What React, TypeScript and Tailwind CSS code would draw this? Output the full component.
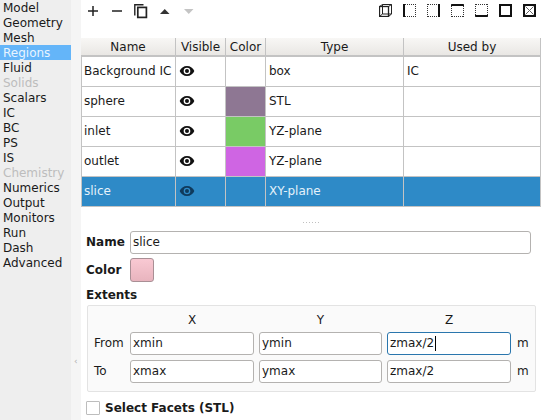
import React from "react";

const nav: [string, boolean?][] = [
  ["Model"], ["Geometry"], ["Mesh"], ["Regions"], ["Fluid"], ["Solids", true], ["Scalars"], ["IC"], ["BC"], ["PS"], ["IS"],
  ["Chemistry", true], ["Numerics"], ["Output"], ["Monitors"], ["Run"], ["Dash"], ["Advanced"],
];

const rows = [
  { name: "Background IC", color: "", type: "box", used: "IC" },
  { name: "sphere", color: "bg-[#8e7793]", type: "STL", used: "" },
  { name: "inlet", color: "bg-[#79cb65]", type: "YZ-plane", used: "" },
  { name: "outlet", color: "bg-[#cf65e3]", type: "YZ-plane", used: "" },
  { name: "slice", color: "", type: "XY-plane", used: "", selected: true },
];

function Eye({ dark }: { dark?: boolean }) {
  return (
    <svg width="16" height="16" viewBox="0 0 24 24" fill={dark ? "#0f3a5c" : "#111"} className="-mt-[1px]">
      <path d="M12 4.5C7 4.5 2.7 7.6 1 12c1.7 4.4 6 7.5 11 7.5s9.3-3.1 11-7.5c-1.7-4.4-6-7.5-11-7.5zM12 17a5 5 0 1 1 0-10 5 5 0 0 1 0 10zm0-8a3 3 0 1 0 0 6 3 3 0 0 0 0-6z" />
    </svg>
  );
}

function ViewIcon({ top, bottom, left, right, cross }: { top?: boolean; bottom?: boolean; left?: boolean; right?: boolean; cross?: boolean }) {
  const line = (on?: boolean) => (on ? { stroke: "#111", strokeWidth: 2 } : { stroke: "#333", strokeWidth: 1, strokeDasharray: "1 1" });
  return (
    <svg width="13" height="13" viewBox="0 0 13 13" fill="none">
      <line x1={left || top ? 0 : 1} y1={top ? 1 : 0.5} x2="13" y2={top ? 1 : 0.5} {...line(top)} />
      <line x1={left || bottom ? 0 : 1} y1={bottom ? 12 : 12.5} x2="13" y2={bottom ? 12 : 12.5} {...line(bottom)} />
      <line x1={left ? 1 : 0.5} y1="0" x2={left ? 1 : 0.5} y2="13" {...line(left)} />
      <line x1={right ? 12 : 12.5} y1="0" x2={right ? 12 : 12.5} y2="13" {...line(right)} />
      {cross && <path d="M2.5 2.5l8 8M10.5 2.5l-8 8" stroke="#666" strokeWidth="1" />}
    </svg>
  );
}

function Field({ value, focused, className = "" }: { value: string; focused?: boolean; className?: string }) {
  return (
    <div className={`flex h-[23px] items-center rounded-[3px] border bg-white pl-[2px] ${focused ? "border-[#2a76ad]" : "border-[#b4b2b0]"} ${className}`}>
      <span>{value}</span>
      {focused && <span className="ml-[1px] h-[15px] w-px bg-black" />}
    </div>
  );
}

function Row({ label, a, b, c, focused }: { label: string; a: string; b: string; c: string; focused?: boolean }) {
  return (
    <div className="flex items-center">
      <span className="w-[42px] pl-[6px]">{label}</span>
      <Field value={a} className="w-[124px]" />
      <Field value={b} className="ml-[5px] w-[123px]" />
      <Field value={c} focused={focused} className="ml-[5px] w-[124px]" />
      <span className="ml-[6px]">m</span>
    </div>
  );
}

const colClass = ["w-[95px]", "w-[50px]", "w-[40px]", "w-[138px]", "flex-1"];

export default function App() {
  return (
    <div className="flex h-[420px] w-[541px] overflow-hidden bg-white text-[12px] leading-[15px] text-[#1a1a1a] [font-family:'DejaVu_Sans',sans-serif]">
      <nav className="w-[71px] shrink-0 bg-[#eeeeee]">
        {nav.map(([n, off]) => (
          <div key={n} className={`h-[15px] pl-[3px] leading-[17px] ${n === "Regions" ? "bg-[#64b5f9] text-[#e8f4ff]" : off ? "text-[#bdbdbd]" : ""}`}>{n}</div>
        ))}
      </nav>
      <div className="relative w-[10px] shrink-0 bg-[#f5f5f5]">
        <span className="absolute left-[3px] top-[354px] text-[9px] text-[#b0b0b0]">‹</span>
      </div>
      <main className="flex min-w-0 flex-1 flex-col">
        <div className="flex h-[38px] items-start justify-between pr-[5px] pt-[3px]">
          <div className="flex items-center gap-[10px] pl-[5px]">
            <svg width="14" height="16" viewBox="0 0 14 16" fill="none" stroke="#222" strokeWidth="1.5"><path d="M2 8h10M7 3v10" /></svg>
            <svg width="14" height="16" viewBox="0 0 14 16" fill="none" stroke="#222" strokeWidth="1.5"><path d="M2 8h10" /></svg>
            <svg width="14" height="16" viewBox="0 0 14 16" fill="none" stroke="#222" strokeWidth="1.4"><path d="M9.5 1.7H0.8v10.8" /><rect x="3.8" y="4.4" width="8.6" height="10" strokeWidth="1.7" /></svg>
            <svg width="14" height="16" viewBox="0 0 14 16" fill="#333"><path d="M2 11L6.75 6l4.75 5z" /></svg>
            <svg width="14" height="16" viewBox="0 0 14 16" fill="#c4c4c4"><path d="M2 6h9.5l-4.75 5z" /></svg>
          </div>
          <div className="flex items-center gap-[11px] pt-[1px]">
            <svg width="13" height="13" viewBox="0 0 13 13" fill="none" stroke="#222" strokeWidth="1"><rect x="0.5" y="2.5" width="9" height="10" strokeWidth="1.3" /><path d="M0.5 2.5l3-2h9v9.5l-3 2.5M9.5 2.5l3-2M3.5 0.5v9.5h9M0.5 12.5l3-2.5" /></svg>
            <ViewIcon left />
            <ViewIcon right />
            <ViewIcon top />
            <ViewIcon bottom />
            <ViewIcon top bottom left right />
            <ViewIcon top bottom left right cross />
          </div>
        </div>

        <div className="border-b border-r border-[#c3c3c3]">
          <div className="flex h-[19px] border-b-2 border-[#c3c3c3] bg-gradient-to-b from-[#f8f7f5] to-[#e9e7e4]">
            {["Name", "Visible", "Color", "Type", "Used by"].map((h, i) => (
              <div key={h} className={`${colClass[i]} flex items-center justify-center pt-[1px] ${i < 4 ? "border-r border-[#c3c3c3]" : ""}`}>{h}</div>
            ))}
          </div>
          {rows.map((r) => (
            <div key={r.name} className={`flex h-[30px] border-b border-l border-[#c3c3c3] last:h-[29px] last:border-b-0 ${r.selected ? "bg-[#2e8ac7] text-[#e4f1fa]" : ""}`}>
              <div className="flex w-[94px] items-center border-r border-[#c3c3c3] pl-[2px]">{r.name}</div>
              <div className="flex w-[50px] items-center border-r border-[#c3c3c3] pl-[3px]"><Eye dark={r.selected} /></div>
              <div className={`w-[40px] border-r border-[#c3c3c3] ${r.color}`} />
              <div className="flex w-[138px] items-center border-r border-[#c3c3c3] pl-[3px]">{r.type}</div>
              <div className="flex flex-1 items-center pl-[3px]">{r.used}</div>
            </div>
          ))}
        </div>

        <div className="flex h-[24px] items-start justify-center pt-[14px]">
          <span className="mt-[1px] h-px w-[17px] bg-[repeating-linear-gradient(90deg,#c0c0c0_0_1px,transparent_1px_3px)]" />
        </div>

        <div className="flex items-center pl-[5px] pr-[10px]">
          <span className="w-[44px] font-bold">Name</span>
          <Field value="slice" className="flex-1" />
        </div>
        <div className="mt-[4px] flex items-center pl-[5px]">
          <span className="w-[44px] font-bold">Color</span>
          <span className="h-[24px] w-[24px] rounded-[3px] border border-[#a98f95] bg-gradient-to-b from-[#f9c9d3] to-[#e8b4be]" />
        </div>
        <div className="mt-[6px] pl-[5px] font-bold">Extents</div>
        <div className="mx-[6px] mb-[8px] mt-[2px] flex w-[449px] flex-col gap-[5px] rounded-[2px] border border-[#e3e3e3] bg-[#fafafa] pb-[8px] pt-[5px]">
          <div className="-mb-[2px] flex h-[18px] items-center">
            <span className="ml-[42px] w-[124px] text-center">X</span>
            <span className="ml-[5px] w-[123px] text-center">Y</span>
            <span className="ml-[5px] w-[124px] text-center">Z</span>
          </div>
          <Row label="From" a="xmin" b="ymin" c="zmax/2" focused />
          <Row label="To" a="xmax" b="ymax" c="zmax/2" />
        </div>
        <label className="flex items-start pl-[5px] font-bold">
          <span className="mt-[1px] h-[14px] w-[14px] rounded-[1px] border border-[#bdbdbd] bg-white" />
          <span className="ml-[5px] pt-[1px]">Select Facets (STL)</span>
        </label>
      </main>
    </div>
  );
}
